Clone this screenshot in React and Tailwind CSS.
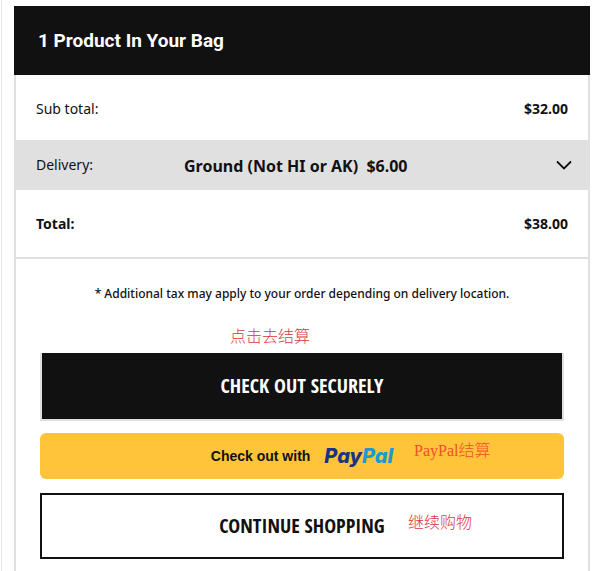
import { useState } from "react";

const deliveryOptions = [
  { id: "ground", name: "Ground (Not HI or AK)", price: 6 },
];

const subTotal = 32;

const money = (value) => `$${value.toFixed(2)}`;

function Note({ className, children }) {
  return (
    <span
      className={`absolute whitespace-nowrap pointer-events-none text-base leading-5 font-light font-['Liberation_Serif','Noto_Sans_CJK_SC',serif] ${className}`}
    >
      {children}
    </span>
  );
}

function PayPalLogo() {
  return (
    <span className="font-['Inter',sans-serif] font-extrabold italic text-xl leading-6">
      <span className="text-[#1b3380]">Pay</span>
      <span className="text-[#1a9bd0]">Pal</span>
    </span>
  );
}

function App() {
  const [delivery, setDelivery] = useState("ground");

  const selected = deliveryOptions.find((o) => o.id === delivery);

  return (
    <div className="ml-px border-l border-[#e4e4e4] bg-white pt-1.5 pl-3 pr-2.5 text-[#111] font-['Noto_Sans',sans-serif]">

      <section>
        <h1 className="bg-[#111] text-white px-6 py-5 text-[19px] leading-[29px] font-bold font-['Roboto',sans-serif]">
          1 Product In Your Bag
        </h1>

        <div className="border-x-2 border-[#e0e0e0]">

          <div className="flex justify-between items-center px-5 pt-0.5 h-[65px] text-sm">
            <span>Sub total:</span>
            <span className="font-bold">{money(subTotal)}</span>
          </div>

          <div className="relative flex items-center bg-[#e0e0e0] h-[50px]">
            <label htmlFor="delivery" className="w-[168px] pl-5 text-sm">
              Delivery:
            </label>
            <select
              id="delivery"
              value={delivery}
              onChange={(e) => setDelivery(e.target.value)}
              className="appearance-none flex-1 h-full pt-0.5 bg-transparent text-base font-bold outline-none"
            >
              {deliveryOptions.map((o) => (
                <option key={o.id} value={o.id}>
                  {`${o.name}\u00a0 ${money(o.price)}`}
                </option>
              ))}
            </select>
            <svg
              className="absolute right-4 w-4 h-4 pointer-events-none"
              viewBox="0 0 16 16"
              fill="none"
              stroke="#111"
              strokeWidth="1.8"
            >
              <path d="M1 4.5L8 11.5L15 4.5" />
            </svg>
          </div>

          <div className="flex justify-between items-center px-5 h-[69px] border-b-2 border-[#e0e0e0] text-sm font-bold">
            <span>Total:</span>
            <span>{money(subTotal + selected.price)}</span>
          </div>

          <div className="px-6 pt-[25px] pb-3">
            <p className="text-center text-xs leading-5 font-medium mb-[49px]">
              * Additional tax may apply to your order depending on delivery location.
            </p>

            <div className="relative mb-3">
              <Note className="bottom-full mb-1.5 left-1/2 -ml-[72px] text-[#d9363e]">
                点击去结算
              </Note>
              <button className="block w-full h-[68px] bg-[#111] bg-clip-padding border-2 border-t-0 border-[#e0e0e0] text-white text-xl font-bold font-['Open_Sans_Condensed','Roboto_Condensed',sans-serif]">
                CHECK OUT SECURELY
              </button>
            </div>

            <div className="relative mb-3.5">
              <button className="flex w-full h-[46px] items-center justify-center gap-3.5 rounded-md bg-[#ffc439] text-sm font-bold font-['Liberation_Sans',sans-serif]">
                Check out with
                <PayPalLogo />
              </button>
              <Note className="top-2 left-1/2 ml-28 text-[#ee4f2c]">
                PayPal结算
              </Note>
            </div>

            <div className="relative">
              <button className="block w-full h-[66px] bg-white border-2 border-[#111] text-xl font-semibold font-['Open_Sans_Condensed','Roboto_Condensed',sans-serif]">
                CONTINUE SHOPPING
              </button>
              <Note className="top-5 left-1/2 ml-[106px] text-[#d9363e]">
                继续购物
              </Note>
            </div>
          </div>

        </div>
      </section>

    </div>
  );
}

export default App;
